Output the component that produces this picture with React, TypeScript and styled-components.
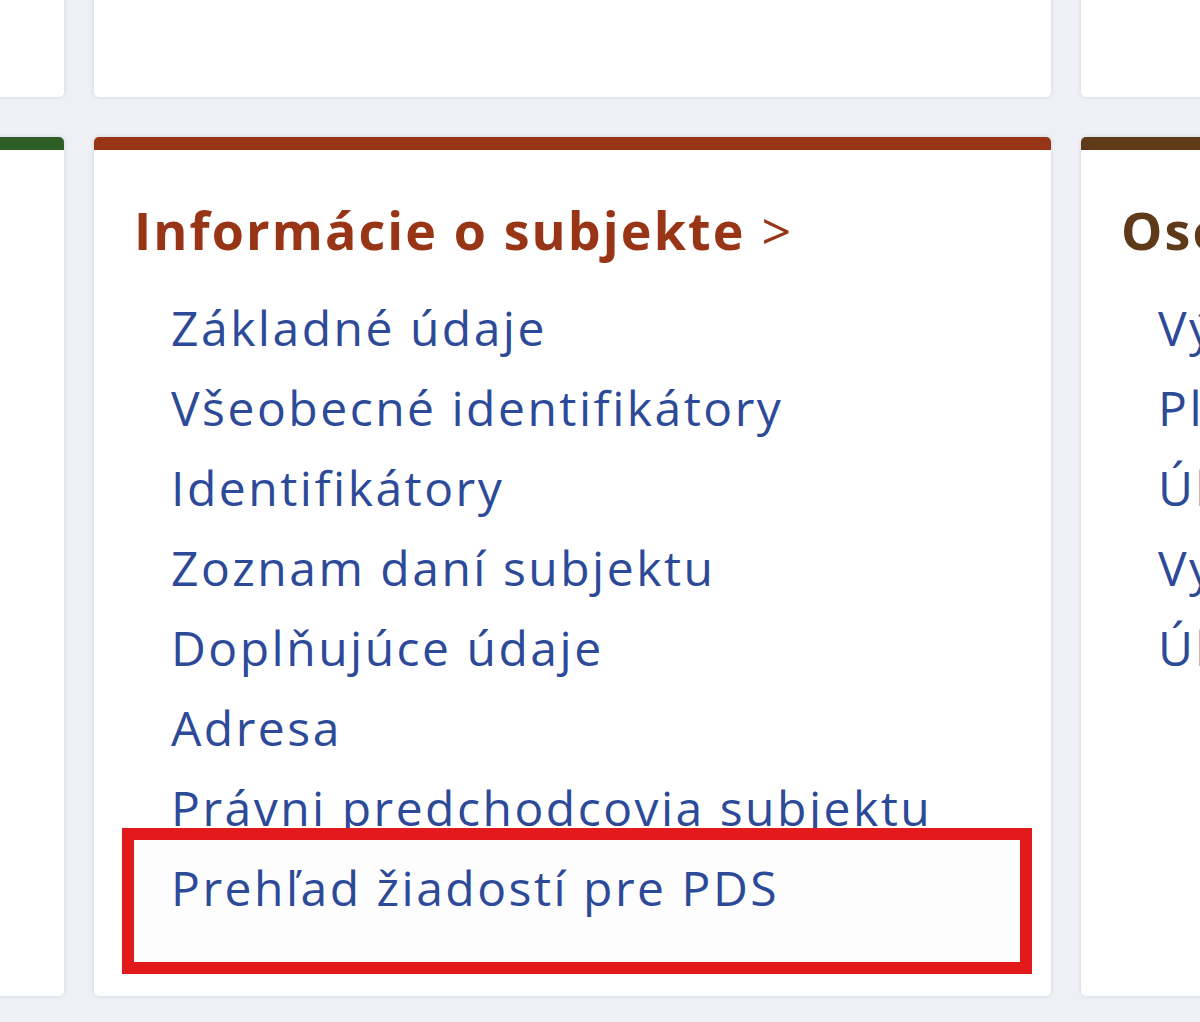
import styled, { createGlobalStyle } from "styled-components";

const GlobalStyle = createGlobalStyle`
    html, body {
        margin: 0;
        padding: 0;
        background: #eef0f5;
        overflow: hidden;
    }
    body {
        font-family: "Open Sans", "Noto Sans", sans-serif;
    }
`;

const Page = styled.div`
    height: 1022px;
    overflow: hidden;
`;

const Grid = styled.div`
    display: grid;
    width: 2931px;
    margin-left: -893px;
    margin-top: -103px;
    grid-template-columns: repeat(3, 957px);
    grid-template-rows: 200px auto;
    gap: 40px 30px;
`;

const Card = styled.section<{ $accent?: string }>`
    background: #ffffff;
    border-radius: 5px;
    box-shadow: 0 0 4px rgba(40, 50, 110, 0.14);
    border-top: ${(p) => (p.$accent ? `13px solid ${p.$accent}` : "none")};
    padding: 46px 41px 68px 40px;
    box-sizing: border-box;
`;

const Heading = styled.h2<{ $color: string }>`
    margin: 0 0 24px 0;
    font-size: 52px;
    line-height: 68px;
    font-weight: 700;
    letter-spacing: 2.1px;
    color: ${(p) => p.$color};
    white-space: nowrap;
`;

const Arrow = styled.span`
    font-weight: 400;
    margin-left: 16px;
`;

const LinkList = styled.ul`
    list-style: none;
    margin: 0;
    padding: 0 0 0 37px;
`;

const LinkItem = styled.li<{ $highlighted?: boolean }>`
    position: relative;
    font-size: 48px;
    line-height: 80px;
    letter-spacing: 2.5px;
    color: #2c4a98;
    white-space: nowrap;

    ${(p) =>
        p.$highlighted &&
        `
        &::before {
            content: "";
            position: absolute;
            top: -20px;
            left: -49px;
            right: -22px;
            bottom: -46px;
            border: 12px solid #e31a1c;
            background: #fdfdfd;
        }
    `}
`;

const LinkText = styled.span`
    position: relative;
`;

type Section = {
    title: string;
    color: string;
    links: string[];
    highlight?: number;
};

const sections: Section[] = [
    {
        title: "Podania",
        color: "#2f5e27",
        links: ["Nové podanie", "Koncepty", "Odoslané podania"],
    },
    {
        title: "Informácie o subjekte",
        color: "#983516",
        links: [
            "Základné údaje",
            "Všeobecné identifikátory",
            "Identifikátory",
            "Zoznam daní subjektu",
            "Doplňujúce údaje",
            "Adresa",
            "Právni predchodcovia subjektu",
            "Prehľad žiadostí pre PDS",
        ],
        highlight: 7,
    },
    {
        title: "Osobný účet",
        color: "#5e3a19",
        links: [
            "Výpis z osobného účtu",
            "Platby",
            "Úhrady",
            "Vyrovnanie preplatkov",
            "Úhrady daní",
        ],
    },
];

export default function App() {
    return (
        <Page>
            <GlobalStyle />
            <Grid>
                <Card />
                <Card />
                <Card />
                {sections.map((s) => (
                    <Card key={s.title} $accent={s.color}>
                        <Heading $color={s.color}>
                            {s.title}
                            <Arrow>&gt;</Arrow>
                        </Heading>
                        <LinkList>
                            {s.links.map((l, i) => (
                                <LinkItem key={l} $highlighted={i === s.highlight}>
                                    <LinkText>{l}</LinkText>
                                </LinkItem>
                            ))}
                        </LinkList>
                    </Card>
                ))}
            </Grid>
        </Page>
    );
}
